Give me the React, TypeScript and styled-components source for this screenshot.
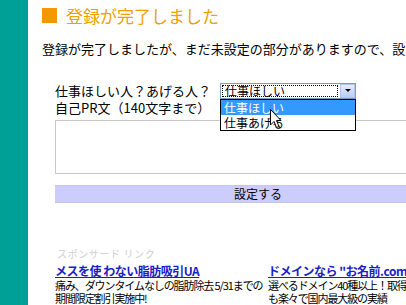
import styled, { createGlobalStyle } from 'styled-components'

const GlobalStyle = createGlobalStyle`
  html, body {
    margin: 0;
    padding: 0;
    background: #fff;
    overflow: hidden;
  }
  body {
    font-family: "Noto Sans CJK JP", "Noto Sans", sans-serif;
    color: #000;
  }
`

const Page = styled.div`
  display: flex;
  width: 406px;
  height: 305px;
  overflow: hidden;
`

const Sidebar = styled.div`
  flex: none;
  width: 28px;
  background: #00a096;
`

const Main = styled.div`
  flex: none;
  width: 440px;
  padding: 8px 0 0 14px;
`

const Heading = styled.h1`
  display: flex;
  align-items: center;
  gap: 9px;
  margin: 0;
  height: 15px;
  font-size: 17px;
  line-height: 15px;
  font-weight: normal;
  color: #f0a000;
`

const Square = styled.span`
  width: 15px;
  height: 15px;
  background: #f39800;
`

const Lead = styled.p`
  margin: 18px 0 0;
  font-size: 13px;
  line-height: 15px;
  white-space: nowrap;
`

const Form = styled.form`
  display: flex;
  flex-direction: column;
  margin: 27px 0 0 13px;
`

const Row = styled.div`
  display: flex;
  align-items: center;
  gap: 9px;
  height: 15px;
  font-size: 13px;
  line-height: 15px;
`

const Label = styled.div`
  margin-top: 2px;
  font-size: 13px;
  line-height: 16px;
`

const SelectWrap = styled.div`
  position: relative;
  width: 136px;
  height: 16px;
`

const SelectBox = styled.div`
  display: flex;
  height: 16px;
  box-sizing: border-box;
  border: 1px solid #7f9db9;
  background: #fff;
`

const Value = styled.div`
  flex: 1;
  margin: 1px 2px 1px 1px;
  border: 1px dotted #000;
  font-size: 12px;
  line-height: 10px;
  padding: 0 2px;
  white-space: nowrap;
`

const ArrowButton = styled.div`
  display: flex;
  align-items: center;
  justify-content: center;
  width: 15px;
  box-sizing: border-box;
  border: 1px solid #b2c4ee;
  background: linear-gradient(#e6edfd, #b9cdf8);
  &::after {
    content: '';
    border-left: 3px solid transparent;
    border-right: 3px solid transparent;
    border-top: 3px solid #000;
  }
`

const List = styled.div`
  position: absolute;
  top: 16px;
  left: 0;
  width: 136px;
  box-sizing: border-box;
  border: 1px solid #000;
  background: #fff;
  z-index: 2;
`

const Option = styled.div<{ $active?: boolean }>`
  height: 15px;
  padding: 0 3px;
  font-size: 12px;
  line-height: 15px;
  background: ${(p) => (p.$active ? '#3399ff' : '#fff')};
  color: ${(p) => (p.$active ? '#fff' : '#000')};
`

const Cursor = styled.svg`
  position: absolute;
  left: 50px;
  top: 26px;
  z-index: 3;
`

const TextArea = styled.div`
  margin-top: 4px;
  height: 54px;
  box-sizing: border-box;
  border: 1px solid #c8c8c8;
`

const SubmitBar = styled.div`
  margin-top: 11px;
  width: 406px;
  height: 18px;
  box-sizing: border-box;
  border-top: 1px solid #c4c4f0;
  border-bottom: 1px solid #c4c4e8;
  background: #ccccff;
  font-size: 12px;
  line-height: 16px;
  text-align: center;
`

const Ads = styled.div`
  margin: 45px 0 0 13px;
`

const Sponsor = styled.div`
  font-size: 10px;
  line-height: 12px;
  letter-spacing: 0.6px;
  color: #cfcfcf;
  margin-left: 2px;
`

const AdGrid = styled.div`
  display: grid;
  grid-template-columns: 213px 213px;
  margin-top: 3px;
`

const AdTitle = styled.a`
  display: block;
  font-size: 12px;
  line-height: 15px;
  letter-spacing: -0.5px;
  font-weight: bold;
  color: #1c20c4;
  text-decoration: underline;
  white-space: pre;
`

const AdText = styled.div`
  margin-top: 1px;
  font-size: 11px;
  line-height: 13px;
  letter-spacing: -1.1px;
  white-space: nowrap;
`

export default function App() {
  return (
    <>
      <GlobalStyle />
      <Page>
        <Sidebar />
        <Main>
          <Heading>
            <Square />
            登録が完了しました
          </Heading>
          <Lead>登録が完了しましたが、まだ未設定の部分がありますので、設定してください。</Lead>
          <Form>
            <Row>
              仕事ほしい人？あげる人？
              <SelectWrap>
                <SelectBox>
                  <Value>仕事ほしい</Value>
                  <ArrowButton />
                </SelectBox>
                <List>
                  <Option $active>仕事ほしい</Option>
                  <Option>仕事あげる</Option>
                </List>
                <Cursor width="12" height="20" viewBox="0 0 12 20">
                  <path
                    d="M0.5 0.5 L0.5 16 L4 12.5 L6.5 18.5 L9 17.5 L6.5 11.5 L11 11.5 Z"
                    fill="#fff"
                    stroke="#000"
                    strokeWidth="1"
                  />
                </Cursor>
              </SelectWrap>
            </Row>
            <Label>自己PR文（140文字まで）</Label>
            <TextArea />
            <SubmitBar>設定する</SubmitBar>
          </Form>
          <Ads>
            <Sponsor>スポンサード リンク</Sponsor>
            <AdGrid>
              <div>
                <AdTitle>メスを使 わない脂肪吸引UA</AdTitle>
                <AdText>
                  痛み、ダウンタイムなしの脂肪除去 5/31までの
                  <br />
                  期間限定割引実施中!
                </AdText>
              </div>
              <div>
                <AdTitle>ドメインなら "お名前.com"</AdTitle>
                <AdText>
                  選べるドメイン40種以上！取得
                  <br />
                  も楽々で国内最大級の実績
                </AdText>
              </div>
            </AdGrid>
          </Ads>
        </Main>
      </Page>
    </>
  )
}
